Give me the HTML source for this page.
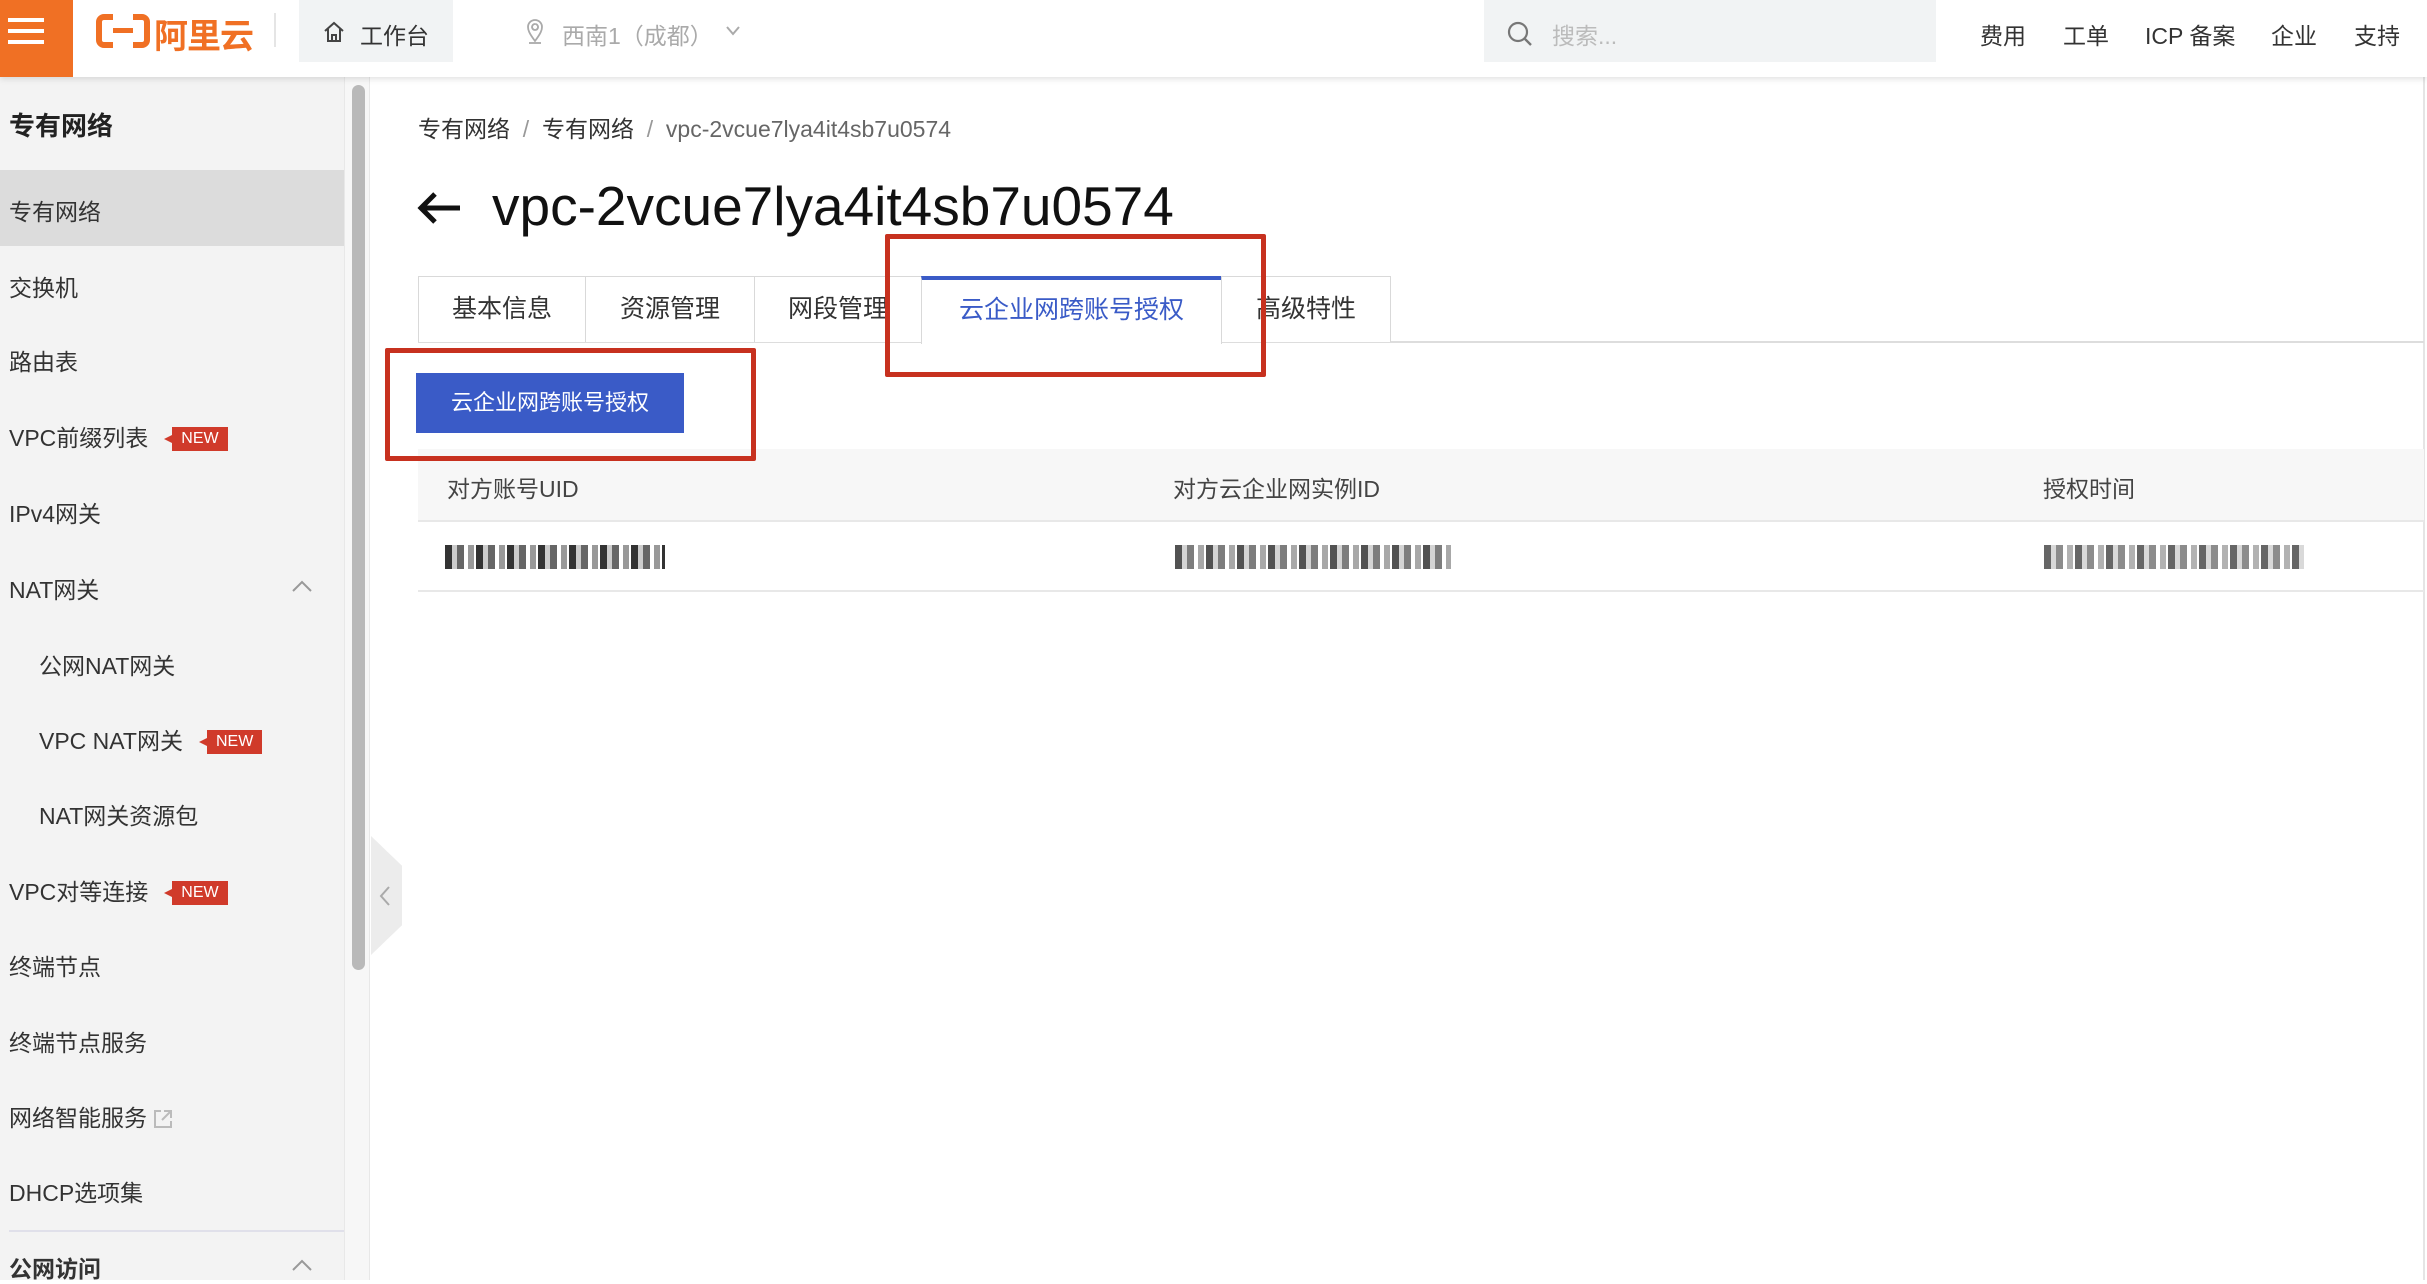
<!DOCTYPE html>
<html><head><meta charset="utf-8"><style>
*{margin:0;padding:0;box-sizing:border-box}
body{width:2427px;height:1280px;overflow:hidden;background:#fff;font-family:"Liberation Sans","Noto Sans CJK SC",sans-serif;color:#333;position:relative}
.a{position:absolute;white-space:nowrap}
.hdr{left:0;top:0;width:2427px;height:77px;background:#fff;box-shadow:0 2px 6px rgba(0,0,0,.12);z-index:5}
.side{left:0;top:77px;width:344px;height:1203px;background:#f3f3f3}
.it{left:9px;font-size:23px;color:#333;line-height:30px}
.new{display:inline-block;background:#d03a2a;color:#fff;font-size:16px;line-height:24px;padding:0 9px;margin-left:24px;vertical-align:3px;position:relative}
.new:before{content:"";position:absolute;left:-8px;top:8px;border-style:solid;border-color:transparent #d03a2a transparent transparent;border-width:4px 8px 4px 0}
.tab{top:276px;height:66px;border:1.5px solid #d9d9d9;border-bottom:none;font-size:25px;color:#333;text-align:center;line-height:64px;background:#fff}
.red{border:5px solid #c7311f;border-radius:2px}
.blur{height:24px;background:repeating-linear-gradient(90deg,#333 0 7px,#ccc 7px 12px,#666 12px 19px,#fff 19px 23px,#999 23px 29px,#fff 29px 31px)}
</style></head><body>
<div class="a hdr">
 <div class="a" style="left:0;top:0;width:73px;height:77px;background:#f07024">
  <div class="a" style="left:8px;top:18px;width:36px;height:4px;background:#fff"></div>
  <div class="a" style="left:8px;top:29px;width:36px;height:4px;background:#fff"></div>
  <div class="a" style="left:8px;top:40px;width:36px;height:4px;background:#fff"></div>
 </div>
 <div class="a" style="left:96px;top:14px;width:54px;height:34px;border:6px solid #f07024;border-radius:8px"></div>
 <div class="a" style="left:113px;top:10px;width:20px;height:42px;background:#fff"></div>
 <div class="a" style="left:113px;top:28px;width:20px;height:5px;background:#f07024"></div>
 <div class="a" style="left:154px;top:9px;font-size:34px;font-weight:bold;color:#f07024;letter-spacing:-1px">阿里云</div>
 <div class="a" style="left:274px;top:13px;width:2px;height:34px;background:#e5e5e5"></div>
 <div class="a" style="left:299px;top:0;width:154px;height:62px;background:#f1f3f4"></div>
 <svg class="a" style="left:322px;top:20px" width="24" height="24" viewBox="0 0 24 24"><path d="M3 11 L12 3 L21 11 M6 9 V21 H18 V9 M10 21 V15 H14 V21" fill="none" stroke="#444" stroke-width="2"/></svg>
 <div class="a" style="left:360px;top:17px;font-size:23px;color:#333">工作台</div>
 <svg class="a" style="left:524px;top:18px" width="22" height="26" viewBox="0 0 22 26"><path d="M11 23 C5 15 4 12 4 9 A7 7 0 0 1 18 9 C18 12 17 15 11 23Z M11 6 A3 3 0 1 0 11.1 6" fill="none" stroke="#aaa" stroke-width="1.8"/><path d="M5 25 H17" stroke="#aaa" stroke-width="1.8"/></svg>
 <div class="a" style="left:562px;top:17px;font-size:23px;color:#aaa">西南1（成都）</div>
 <svg class="a" style="left:725px;top:25px" width="16" height="12" viewBox="0 0 16 12"><path d="M2 2 L8 9 L14 2" fill="none" stroke="#aaa" stroke-width="2"/></svg>
 <div class="a" style="left:1484px;top:0;width:452px;height:62px;background:#f1f3f4"></div>
 <svg class="a" style="left:1506px;top:20px" width="28" height="28" viewBox="0 0 28 28"><circle cx="12" cy="12" r="9" fill="none" stroke="#777" stroke-width="2.2"/><path d="M19 19 L25 25" stroke="#777" stroke-width="2.4"/></svg>
 <div class="a" style="left:1552px;top:17px;font-size:23px;color:#bbb">搜索...</div>
 <div class="a" style="left:1980px;top:17px;font-size:23px;color:#333">费用</div>
 <div class="a" style="left:2063px;top:17px;font-size:23px;color:#333">工单</div>
 <div class="a" style="left:2145px;top:17px;font-size:23px;color:#333">ICP 备案</div>
 <div class="a" style="left:2271px;top:17px;font-size:23px;color:#333">企业</div>
 <div class="a" style="left:2354px;top:17px;font-size:23px;color:#333">支持</div>
</div>
<div class="a side"></div>
<div class="a" style="left:344px;top:77px;width:26px;height:1203px;background:#f7f7f7;border-left:1px solid #e8e8e8;border-right:1px solid #e8e8e8"></div>
<div class="a" style="left:352px;top:85px;width:13px;height:885px;background:#b9b9b9;border-radius:7px"></div>
<div class="a" style="left:371px;top:836px;width:31px;height:119px;background:#ececec;clip-path:polygon(0 0,100% 25%,100% 75%,0 100%)"></div>
<svg class="a" style="left:378px;top:884px" width="14" height="24" viewBox="0 0 14 24"><path d="M11 3 L3 12 L11 21" fill="none" stroke="#aaa" stroke-width="2"/></svg>
<div class="a" style="left:9px;top:106px;font-size:26px;font-weight:bold;color:#222">专有网络</div>
<div class="a" style="left:0;top:170px;width:344px;height:76px;background:#dcdcdc"></div>
<div class="a it" style="top:197px">专有网络</div>
<div class="a it" style="top:273px">交换机</div>
<div class="a it" style="top:347px">路由表</div>
<div class="a it" style="top:423px">VPC前缀列表<span class="new">NEW</span></div>
<div class="a it" style="top:499px">IPv4网关</div>
<div class="a it" style="top:575px">NAT网关</div>
<svg class="a" style="left:290px;top:578px" width="24" height="16" viewBox="0 0 24 16"><path d="M3 13 L12 4 L21 13" fill="none" stroke="#999" stroke-width="2"/></svg>
<div class="a it" style="left:39px;top:651px">公网NAT网关</div>
<div class="a it" style="left:39px;top:726px">VPC NAT网关<span class="new">NEW</span></div>
<div class="a it" style="left:39px;top:801px">NAT网关资源包</div>
<div class="a it" style="top:877px">VPC对等连接<span class="new">NEW</span></div>
<div class="a it" style="top:952px">终端节点</div>
<div class="a it" style="top:1028px">终端节点服务</div>
<div class="a it" style="top:1103px">网络智能服务</div>
<svg class="a" style="left:152px;top:1108px" width="22" height="22" viewBox="0 0 22 22"><path d="M9 3 H3 V19 H19 V13 M12 3 H19 V10 M19 3 L10 12" fill="none" stroke="#bbb" stroke-width="2"/></svg>
<div class="a it" style="top:1178px">DHCP选项集</div>
<div class="a" style="left:9px;top:1230px;width:335px;height:2px;background:#e0e0ea"></div>
<div class="a it" style="top:1254px;font-weight:bold">公网访问</div>
<svg class="a" style="left:290px;top:1257px" width="24" height="16" viewBox="0 0 24 16"><path d="M3 13 L12 4 L21 13" fill="none" stroke="#999" stroke-width="2"/></svg>
<div class="a" style="left:2423px;top:77px;width:2px;height:1203px;background:#e5e5e5"></div>

<div class="a" style="left:418px;top:110px;font-size:23px;color:#333">专有网络 &nbsp;<span style="color:#999">/</span>&nbsp; 专有网络 &nbsp;<span style="color:#999">/</span>&nbsp; <span style="color:#666">vpc-2vcue7lya4it4sb7u0574</span></div>
<svg class="a" style="left:416px;top:190px" width="48" height="36" viewBox="0 0 48 36"><path d="M44 18 H5 M19 4 L5 18 L19 32" fill="none" stroke="#111" stroke-width="5"/></svg>
<div class="a" style="left:492px;top:174px;font-size:55px;color:#111">vpc-2vcue7lya4it4sb7u0574</div>

<div class="a" style="left:418px;top:341px;width:2006px;height:2px;background:#ddd"></div>
<div class="a tab" style="left:418px;width:168px">基本信息</div>
<div class="a tab" style="left:585px;width:170px">资源管理</div>
<div class="a tab" style="left:754px;width:168px">网段管理</div>
<div class="a tab" style="left:921px;width:301px;height:68px;border-top:4px solid #3a5bc7;color:#3a5bc7;line-height:60px">云企业网跨账号授权</div>
<div class="a tab" style="left:1221px;width:170px">高级特性</div>

<div class="a" style="left:416px;top:373px;width:268px;height:60px;background:#3a5bc7;color:#fff;font-size:22px;text-align:center;line-height:60px">云企业网跨账号授权</div>

<div class="a" style="left:418px;top:449px;width:2006px;height:73px;background:#f7f7f7;border-bottom:2px solid #e8e8e8"></div>
<div class="a" style="left:447px;top:470px;font-size:23px;color:#444">对方账号UID</div>
<div class="a" style="left:1173px;top:470px;font-size:23px;color:#444">对方云企业网实例ID</div>
<div class="a" style="left:2043px;top:470px;font-size:23px;color:#444">授权时间</div>
<div class="a" style="left:418px;top:590px;width:2006px;height:2px;background:#e8e8e8"></div>
<div class="a blur" style="left:445px;top:545px;width:220px"></div>
<div class="a blur" style="left:1175px;top:545px;width:276px;opacity:.85"></div>
<div class="a blur" style="left:2044px;top:545px;width:260px;opacity:.75"></div>

<div class="a red" style="left:885px;top:234px;width:381px;height:143px"></div>
<div class="a red" style="left:385px;top:348px;width:371px;height:113px"></div>
</body></html>
